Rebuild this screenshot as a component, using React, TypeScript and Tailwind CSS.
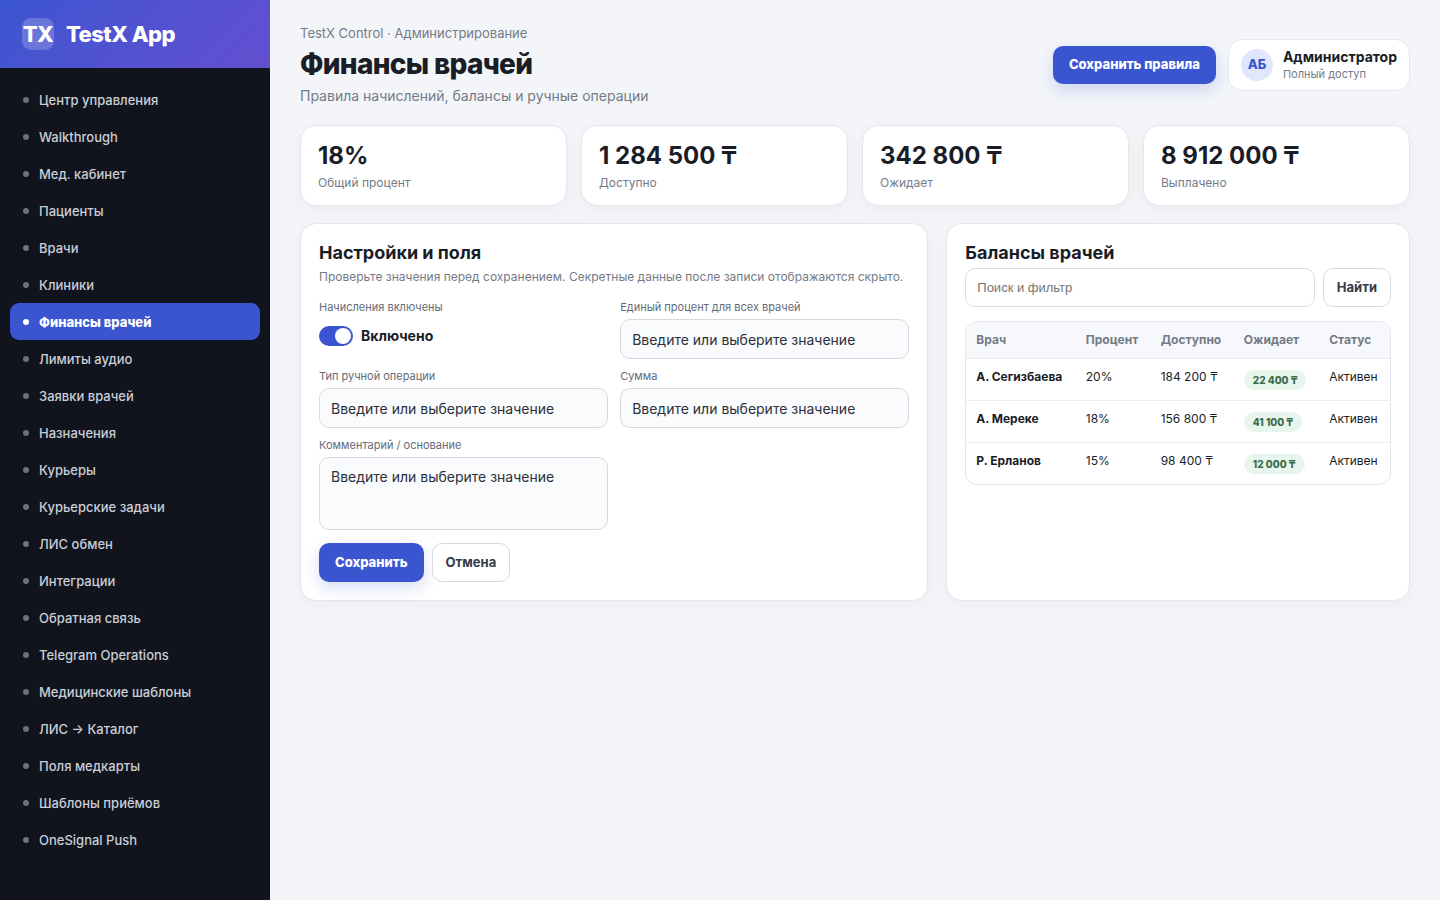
import React from 'react';

const navItems = [
  "Центр управления",
  "Walkthrough",
  "Мед. кабинет",
  "Пациенты",
  "Врачи",
  "Клиники",
  "Финансы врачей",
  "Лимиты аудио",
  "Заявки врачей",
  "Назначения",
  "Курьеры",
  "Курьерские задачи",
  "ЛИС обмен",
  "Интеграции",
  "Обратная связь",
  "Telegram Operations",
  "Медицинские шаблоны",
  "ЛИС → Каталог",
  "Поля медкарты",
  "Шаблоны приёмов",
  "OneSignal Push",
];

const stats = [
  { value: "18%", label: "Общий процент" },
  { value: "1 284 500 ₸", label: "Доступно" },
  { value: "342 800 ₸", label: "Ожидает" },
  { value: "8 912 000 ₸", label: "Выплачено" },
];

const columns = ["Врач", "Процент", "Доступно", "Ожидает", "Статус"];

const doctors = [
  { name: "А. Сегизбаева", percent: "20%", available: "184 200 ₸", pending: "22 400 ₸", status: "Активен" },
  { name: "А. Мереке", percent: "18%", available: "156 800 ₸", pending: "41 100 ₸", status: "Активен" },
  { name: "Р. Ерланов", percent: "15%", available: "98 400 ₸", pending: "12 000 ₸", status: "Активен" },
];

const cardClass = "bg-white border border-[#e3e6ec] rounded-2xl shadow-[0_4px_16px_rgba(20,30,60,0.04)]";
const fieldClass = "block w-full rounded-[10px] border border-[#d5d9e2] bg-[#fafbfd] px-[11px] text-sm text-[#2b303b] placeholder:text-[#2b303b] placeholder:opacity-100";
const primaryClass = "rounded-[10px] bg-[#3b55d1] px-4 text-[13px] font-extrabold text-white shadow-[0_6px_16px_rgba(59,85,209,0.2)]";
const secondaryClass = "rounded-[10px] border border-[#d5d9e2] bg-white px-[13px] text-[13px] font-bold text-[#333b49]";

const Sidebar: React.FC = () => (
  <aside className="w-[270px] shrink-0 bg-[#11141c]">
    <div className="flex h-[68px] items-center gap-3 bg-linear-135 from-[#3b55d1] to-[#634fd0] px-[22px] text-white">
      <div className="flex size-8 items-center justify-center rounded-[9px] bg-white/20 text-[22px] font-extrabold tracking-tight">TX</div>
      <div className="text-[22px] font-extrabold tracking-tight">TestX App</div>
    </div>
    <nav className="px-[10px] pt-[13px]">
      {navItems.map((item) => {
        const active = item === "Финансы врачей";
        return (
          <a
            key={item}
            href="#"
            aria-current={active ? "page" : undefined}
            className={`flex h-[37px] items-center gap-[10px] rounded-[9px] px-[13px] text-[13px] leading-5 ${active ? "bg-[#3b55d1] font-extrabold text-white" : "font-medium text-[#c9ced8]"}`}
          >
            <span className={`size-[6px] rounded-full ${active ? "bg-white" : "bg-[#6c7280]"}`} />
            {item}
          </a>
        );
      })}
    </nav>
  </aside>
);

const Header: React.FC = () => (
  <header className="flex items-center justify-between">
    <div>
      <p className="text-[13px] leading-4 text-[#747b88]">TestX Control · Администрирование</p>
      <h1 className="mt-1 text-[28px] leading-[38px] font-extrabold tracking-tight text-[#191d26]">Финансы врачей</h1>
      <p className="mt-[5px] text-sm leading-4 text-[#747b88]">Правила начислений, балансы и ручные операции</p>
    </div>
    <div className="flex items-center gap-3">
      <button className={`${primaryClass} h-[38px]`}>Сохранить правила</button>
      <div className="flex items-center gap-[10px] rounded-[14px] border border-[#e3e6ec] bg-white px-3 py-2">
        <div className="flex size-8 items-center justify-center rounded-full bg-[#e0e6fc] text-[13px] font-extrabold text-[#3b55d1]">АБ</div>
        <div>
          <div className="text-sm leading-[18px] font-bold text-[#191d26]">Администратор</div>
          <div className="text-[11px] leading-4 text-[#747b88]">Полный доступ</div>
        </div>
      </div>
    </div>
  </header>
);

const Field: React.FC<{ id: string; label: string; children: React.ReactNode }> = ({ id, label, children }) => (
  <div>
    <label htmlFor={id} className="mb-1 block text-[11px] leading-4 text-[#636b79]">{label}</label>
    {children}
  </div>
);

const SettingsPanel: React.FC = () => {
  const hint = "Введите или выберите значение";
  return (
    <section className={`${cardClass} p-[18px]`}>
      <h2 className="text-lg leading-[22px] font-bold text-[#191d26]">Настройки и поля</h2>
      <p className="mt-[5px] text-xs leading-4 text-[#747b88]">
        Проверьте значения перед сохранением. Секретные данные после записи отображаются скрыто.
      </p>
      <div className="mt-[14px] grid grid-cols-2 gap-x-3 gap-y-[9px]">
        <div>
          <div className="mb-[11px] text-[11px] leading-4 text-[#636b79]">Начисления включены</div>
          <label className="flex items-center gap-2 text-sm leading-5 font-bold text-[#191d26]">
            <input
              type="checkbox"
              defaultChecked
              className="flex h-5 w-[34px] appearance-none items-center justify-start rounded-full bg-[#c9ced8] px-[2px] checked:justify-end checked:bg-[#3b55d1] before:size-4 before:rounded-full before:bg-white before:content-['']"
            />
            Включено
          </label>
        </div>
        <Field id="percent" label="Единый процент для всех врачей">
          <input id="percent" type="text" placeholder={hint} className={`${fieldClass} h-10`} />
        </Field>
        <Field id="operation" label="Тип ручной операции">
          <input id="operation" type="text" placeholder={hint} className={`${fieldClass} h-10`} />
        </Field>
        <Field id="amount" label="Сумма">
          <input id="amount" type="text" placeholder={hint} className={`${fieldClass} h-10`} />
        </Field>
        <Field id="comment" label="Комментарий / основание">
          <textarea id="comment" placeholder={hint} className={`${fieldClass} h-[73px] resize-none py-[9px]`} />
        </Field>
      </div>
      <div className="mt-[13px] flex gap-2">
        <button className={`${primaryClass} h-[39px]`}>Сохранить</button>
        <button className={`${secondaryClass} h-[39px]`}>Отмена</button>
      </div>
    </section>
  );
};

const BalancesPanel: React.FC = () => (
  <section className={`${cardClass} p-[18px]`}>
    <h2 className="text-lg leading-[22px] font-bold text-[#191d26]">Балансы врачей</h2>
    <div className="mt-1 flex gap-2">
      <input
        type="search"
        aria-label="Поиск и фильтр"
        placeholder="Поиск и фильтр"
        className="h-[39px] min-w-0 flex-1 rounded-[10px] border border-[#d9dde5] bg-white px-[11px] font-['Liberation_Sans',sans-serif] text-[13px] placeholder:text-[#757575]"
      />
      <button className={`${secondaryClass} h-[39px]`}>Найти</button>
    </div>
    <div className="mt-[14px] overflow-hidden rounded-xl border border-[#e3e6ec]">
      <table className="w-full text-left text-xs text-[#191d26]">
        <thead>
          <tr className="h-9 border-b border-[#e9ecf1] bg-[#f6f8fb] text-[#747b88]">
            {columns.map((col) => (
              <th key={col} className="px-[10px] font-bold">{col}</th>
            ))}
          </tr>
        </thead>
        <tbody>
          {doctors.map((doc) => (
            <tr key={doc.name} className="border-b border-[#e9ecf1] align-top leading-4 whitespace-nowrap last:border-b-0">
              <td className="px-[10px] pt-[10px] font-bold">{doc.name}</td>
              <td className="px-[10px] pt-[10px]">{doc.percent}</td>
              <td className="px-[10px] pt-[10px]">{doc.available}</td>
              <td className="px-[10px] pt-[11px] pb-[10px]">
                <span className="block w-fit rounded-full bg-[#e8f5ec] px-[9px] text-[10px] leading-5 font-extrabold text-[#3a6b4a]">{doc.pending}</span>
              </td>
              <td className="px-[10px] pt-[10px]">{doc.status}</td>
            </tr>
          ))}
        </tbody>
      </table>
    </div>
  </section>
);

const App: React.FC = () => {
  return (
    <div className="flex min-h-screen bg-[#f3f5f9] font-['Inter','Noto_Sans',sans-serif]">
      <Sidebar />
      <main className="min-w-0 flex-1 px-[30px] pt-[25px] pb-[30px]">
        <Header />
        <div className="mt-[21px] grid grid-cols-4 gap-[14px]">
          {stats.map((stat) => (
            <div key={stat.label} className={`${cardClass} px-[17px] pt-4 pb-[14px]`}>
              <div className="text-2xl leading-7 font-bold text-[#191d26]">{stat.value}</div>
              <div className="mt-[5px] text-xs leading-4 text-[#747b88]">{stat.label}</div>
            </div>
          ))}
        </div>
        <div className="mt-[17px] grid grid-cols-[1.355fr_1fr] gap-[18px]">
          <SettingsPanel />
          <BalancesPanel />
        </div>
      </main>
    </div>
  );
};

export default App;
